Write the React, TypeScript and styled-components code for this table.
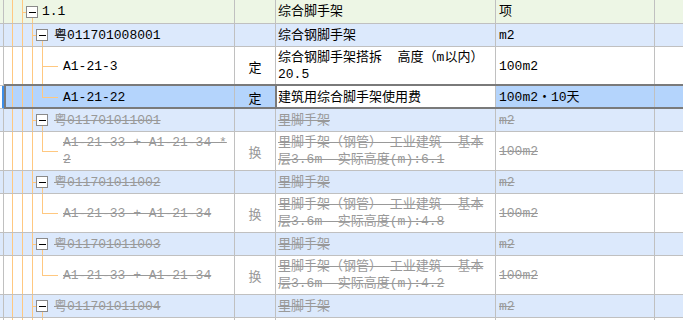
import React from "react";
import styled, { createGlobalStyle, css } from "styled-components";

type Kind = "group" | "code" | "item";

type Line = {
  kind: Kind;
  h: number;
  code: string[];
  tag?: string;
  name: string[];
  unit: string;
  last?: boolean;
  active?: boolean;
  gone?: boolean;
};

const GRID = "#c0c0c0";
const ORANGE = "#ffc880";
const DARK = "#7a7a7a";

const rowBg = {
  group: "#edf6e5",
  code: "#dce9fc",
  item: "#ffffff",
  active: "#b4d4fc",
};

const GlobalStyle = createGlobalStyle`
  html, body {
    margin: 0;
    padding: 0;
    background: #fff;
  }
  body {
    font-family: "Liberation Mono", "Noto Sans CJK SC", monospace;
    font-size: 13px;
    color: #000;
  }
`;

const Sheet = styled.div`
  width: 683px;
  height: 320px;
  overflow: hidden;
  display: flex;
  flex-direction: column;
`;

const Row = styled.div<{ $bg: string; $h: number; $active?: boolean }>`
  position: relative;
  flex: none;
  display: grid;
  grid-template-columns: 4px 231px 41px 220px 159px 1fr;
  height: ${(p) => p.$h + 1}px;
  background: ${(p) => p.$bg};

  ${(p) =>
    p.$active &&
    css`
      &::after {
        content: "";
        position: absolute;
        top: -2px;
        bottom: 0;
        left: 4px;
        right: -10px;
        border: 2px solid ${DARK};
        pointer-events: none;
      }
    `}
`;

const Cell = styled.div`
  display: flex;
  align-items: center;
  min-width: 0;
  overflow: hidden;
  border-right: 1px solid ${GRID};
  border-bottom: 1px solid ${GRID};
`;

const Gutter = styled(Cell)<{ $active?: boolean }>`
  ${(p) =>
    p.$active &&
    css`
      background: linear-gradient(to right, #fff 0 2px, #3d8ee8 2px);
      border-right-color: #3d8ee8;
    `}
`;

const TreeCell = styled(Cell)``;

const TagCell = styled(Cell)<{ $gone?: boolean }>`
  justify-content: center;
  font-family: "Noto Sans CJK SC", sans-serif;
  color: ${(p) => (p.$gone ? "#999" : "#000")};
`;

const NameCell = styled(Cell)<{ $active?: boolean }>`
  padding-left: 2px;
  ${(p) =>
    p.$active &&
    css`
      background: #fff;
      box-shadow: -1px 0 0 ${DARK}, inset 1px 0 0 ${DARK};
    `}
`;

const UnitCell = styled(Cell)`
  padding-left: 3px;
`;

const TailCell = styled(Cell)`
  border-right: none;
`;

const Text = styled.div<{ $gone?: boolean }>`
  line-height: 17px;
  white-space: pre;
  color: ${(p) => (p.$gone ? "#999" : "#000")};
  text-decoration: ${(p) => (p.$gone ? "line-through" : "none")};
  text-decoration-thickness: 1px;

  span {
    display: block;
  }
`;

const Lines = ({ lines, gone }: { lines: string[]; gone?: boolean }) => (
  <Text $gone={gone}>
    {lines.map((l, i) => (
      <span key={i}>{l}</span>
    ))}
  </Text>
);

// tree guides, drawn in cell coordinates (cell starts at page x = 4)
const TreeLines = ({ kind, h, last }: { kind: Kind; h: number; last?: boolean }) => {
  const cy = Math.round(h / 2);
  const v = (x: number) => x - 4 + 0.5;
  const full = kind === "group" ? [12, 22] : [12, 22, 32];
  const width = kind === "group" ? 38 : kind === "code" ? 50 : 59;
  const boxL = kind === "group" ? 26 : 36;
  const stem = kind === "group" ? 22 : 32;

  return (
    <svg width={width} height={h} style={{ flex: "none" }} shapeRendering="crispEdges">
      {full.map((x) => (
        <line key={x} x1={v(x)} y1={0} x2={v(x)} y2={h} stroke={ORANGE} />
      ))}
      {kind === "item" ? (
        <>
          <line x1={v(42)} y1={0} x2={v(42)} y2={last ? cy + 1 : h} stroke={ORANGE} />
          <line x1={42 - 4} y1={cy + 0.5} x2={58 - 4} y2={cy + 0.5} stroke={ORANGE} />
        </>
      ) : (
        <>
          <line x1={stem - 4} y1={cy + 0.5} x2={boxL - 4} y2={cy + 0.5} stroke={ORANGE} />
          <line x1={v(boxL + 6)} y1={cy + 6} x2={v(boxL + 6)} y2={h} stroke={ORANGE} />
          <rect x={v(boxL)} y={cy - 6 + 0.5} width={11} height={11} fill="#fff" stroke="#8a8a8a" />
          <line x1={boxL + 3 - 4} y1={cy + 0.5} x2={boxL + 10 - 4} y2={cy + 0.5} stroke="#000" />
        </>
      )}
    </svg>
  );
};

const scaffold = (no: string, h: string): Line[] => [
  { kind: "code", h: 22, gone: true, code: [`粤01170101100${no}`], name: ["里脚手架"], unit: "m2" },
  {
    kind: "item",
    h: 38,
    last: true,
    gone: true,
    code: no === "1" ? ["A1-21-33 + A1-21-34 *", "2"] : ["A1-21-33 + A1-21-34"],
    tag: "换",
    name: ["里脚手架（钢管） 工业建筑  基本", `层3.6m  实际高度(m):${h}`],
    unit: "100m2",
  },
];

const rows: Line[] = [
  { kind: "group", h: 23, code: ["1.1"], name: ["综合脚手架"], unit: "项" },
  { kind: "code", h: 22, code: ["粤011701008001"], name: ["综合钢脚手架"], unit: "m2" },
  {
    kind: "item",
    h: 38,
    code: ["A1-21-3"],
    tag: "定",
    name: ["综合钢脚手架搭拆  高度（m以内）", "20.5"],
    unit: "100m2",
  },
  {
    kind: "item",
    h: 22,
    last: true,
    active: true,
    code: ["A1-21-22"],
    tag: "定",
    name: ["建筑用综合脚手架使用费"],
    unit: "100m2・10天",
  },
  ...scaffold("1", "6.1"),
  ...scaffold("2", "4.8"),
  ...scaffold("3", "4.2"),
  { kind: "code", h: 22, gone: true, code: ["粤011701011004"], name: ["里脚手架"], unit: "m2" },
  // next child row, only its top edge is in view
  { kind: "item", h: 38, last: true, code: [], name: [], unit: "" },
];

export default function App() {
  return (
    <>
      <GlobalStyle />
      <Sheet>
        {rows.map((r, i) => (
          <Row key={i} $h={r.h} $bg={r.active ? rowBg.active : rowBg[r.kind]} $active={r.active}>
            <Gutter $active={r.active} />
            <TreeCell>
              <TreeLines kind={r.kind} h={r.h} last={r.last} />
              <Lines lines={r.code} gone={r.gone} />
            </TreeCell>
            <TagCell $gone={r.gone}>{r.tag}</TagCell>
            <NameCell $active={r.active}>
              <Lines lines={r.name} gone={r.gone} />
            </NameCell>
            <UnitCell>
              <Lines lines={r.unit ? [r.unit] : []} gone={r.gone} />
            </UnitCell>
            <TailCell />
          </Row>
        ))}
      </Sheet>
    </>
  );
}
